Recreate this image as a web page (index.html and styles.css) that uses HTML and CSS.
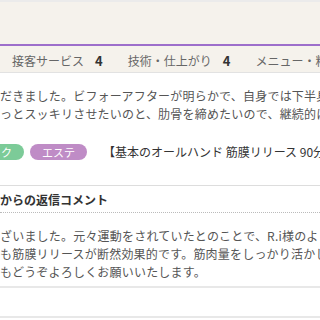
FILE: index.html
```html
<!DOCTYPE html>
<html lang="ja">
<head>
  <meta charset="UTF-8">
  <meta name="viewport" content="width=device-width, initial-scale=1.0"/>
  <title>口コミ</title>
  <link rel="stylesheet" href="styles.css">
</head>
<body>
  <div class="review-head"></div>

  <div class="ratings">
    <span class="rate-label">接客サービス</span><span class="rate-score">4</span><span class="sep"></span>
    <span class="rate-label">技術・仕上がり</span><span class="rate-score">4</span><span class="sep"></span>
    <span class="rate-label">メニュー・料金</span>
  </div>

  <div class="review-body">
    <p class="text">だきました。ビフォーアフターが明らかで、自身では下半身<br>っとスッキリさせたいのと、肋骨を締めたいので、継続的に</p>

    <div class="menu-row">
      <span class="tag tag-green">ク</span>
      <span class="tag tag-purple">エステ</span>
      <span class="menu-name">【基本のオールハンド 筋膜リリース 90分】</span>
    </div>
  </div>

  <div class="reply">
    <h3 class="reply-title">からの返信コメント</h3>
    <p class="text">ざいました。元々運動をされていたとのことで、R.i様のよ<br>も筋膜リリースが断然効果的です。筋肉量をしっかり活かし<br>もどうぞよろしくお願いいたします。</p>
  </div>

  <div class="next-review"></div>
</body>
</html>
```

FILE: styles.css
```css
:root {
  --beige: #f5f2ec;
  --purple: #9d6fcb;
  --text: #555;
  --line: #e2e2e2;
}

* {
  box-sizing: border-box;
}

html, body {
  margin: 0;
  width: 320px;
  height: 320px;
  overflow: hidden;
}

body {
  font-family: "Noto Sans CJK JP", "Noto Sans", sans-serif;
  background: #fff;
  color: var(--text);
}

.review-head {
  height: 46px;
  background: var(--beige);
  border-top: 2px solid #ebebeb;
  border-bottom: 2px solid var(--purple);
}

.ratings {
  display: flex;
  align-items: center;
  height: 27px;
  padding: 3px 0 0 12px;
  background: var(--beige);
  border-bottom: 1px solid var(--line);
  white-space: nowrap;
  font-size: 12px;
}

.rate-label {
  color: #666;
}

.rate-score {
  margin-left: 11px;
  font-size: 13px;
  font-weight: bold;
  color: #333;
}

.sep {
  width: 1px;
  height: 14px;
  background: #aaa;
  margin: 0 14px 0 11px;
}

.text {
  margin: 0;
  font-size: 12px;
  line-height: 18px;
  letter-spacing: 0.2px;
  white-space: nowrap;
}

.review-body {
  padding-top: 14px;
}

.menu-row {
  display: flex;
  align-items: center;
  gap: 6px;
  margin-top: 21px;
  white-space: nowrap;
}

.tag {
  display: inline-flex;
  align-items: center;
  height: 16px;
  padding: 0 12px;
  border-radius: 8px;
  color: #fff;
  font-size: 11px;
}

.tag-green {
  background: #7ccb98;
  margin-left: -11px;
}

.tag-purple {
  background: #bf8cc6;
}

.menu-name {
  margin-left: 10px;
  font-size: 12px;
  line-height: 16px;
  color: #333;
}

.reply {
  margin-top: 25px;
  border-top: 1px solid #ddd;
}

.reply-title {
  margin: 0;
  padding: 5px 0 3px;
  font-size: 12px;
  line-height: 18px;
  color: #333;
  border-bottom: 1px dotted #bbb;
}

.reply .text {
  padding: 14px 0 5px;
}

.next-review {
  height: 32px;
  border-top: 2px solid #e8e8e8;
  border-bottom: 2px solid #e8e8e8;
}
```
